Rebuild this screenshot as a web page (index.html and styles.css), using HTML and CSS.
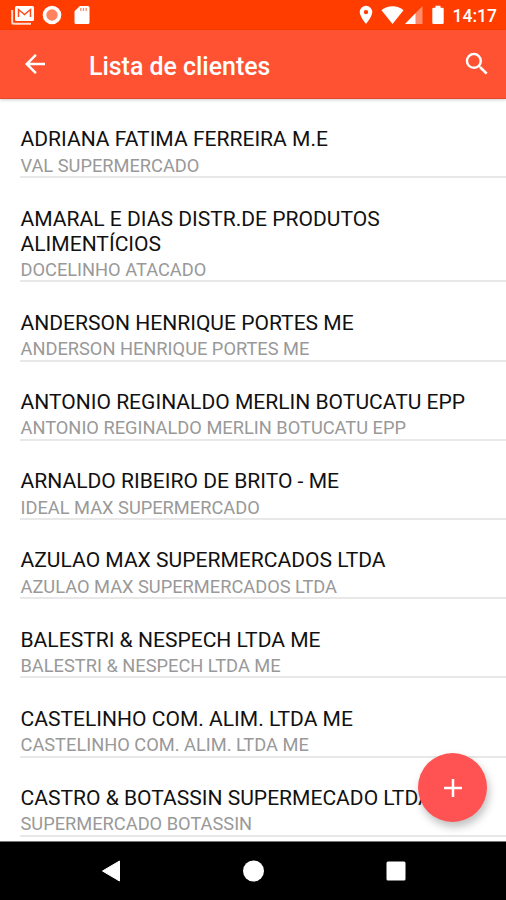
FILE: index.html
```html
<!DOCTYPE html>
<html lang="pt-BR">
<head>
    <meta charset="UTF-8">
    <meta name="viewport" content="width=device-width, initial-scale=1.0">
    <title>Lista de clientes</title>
    <link rel="stylesheet" href="styles.css">
</head>
<body>
    <div class="screen">
        <div class="status-bar">
            <div class="notifications">
                <svg width="24" height="20" viewBox="0 0 24 20">
                    <path d="M1.2 5v12.2a1.5 1.5 0 0 0 1.5 1.5H20" fill="none" stroke="#ffd9cf" stroke-width="2"/>
                    <rect x="4" y="1" width="19" height="15" rx="1.5" fill="#fff"/>
                    <path d="M7.5 12V4.5l6 5 6-5V12" fill="none" stroke="#ff4a1c" stroke-width="1.5"/>
                </svg>
                <svg width="20" height="20" viewBox="0 0 20 20">
                    <circle cx="10" cy="10" r="9.3" fill="#fff"/>
                    <circle cx="10" cy="10" r="5.7" fill="#ff825f"/>
                </svg>
                <svg class="sd-icon" width="16" height="20" viewBox="0 0 16 20">
                    <path d="M5.8 1H14a1.5 1.5 0 0 1 1.5 1.5v15A1.5 1.5 0 0 1 14 19H2a1.5 1.5 0 0 1-1.5-1.5V6.3z" fill="#fff"/>
                    <path d="M6.8 3v3M9.5 3v3M12.2 3v3" stroke="#ff8a6b" stroke-width="1.3"/>
                </svg>
            </div>
            <div class="indicators">
                <svg width="14" height="20" viewBox="0 0 14 20">
                    <path fill-rule="evenodd" d="M7 .8A6.3 6.3 0 0 0 .7 7.1C.7 11.7 7 19 7 19s6.3-7.3 6.3-11.9A6.3 6.3 0 0 0 7 .8zM7 9.3a2.2 2.2 0 1 1 0-4.4 2.2 2.2 0 0 1 0 4.4z" fill="#fff"/>
                </svg>
                <svg class="wifi-icon" width="23" height="20" viewBox="0 0 23 20">
                    <path d="M11.5 19 .5 5.2C3.5 2.6 7.3 1.2 11.5 1.2s8 1.4 11 4z" fill="#fff"/>
                </svg>
                <svg width="18" height="20" viewBox="0 0 18 20">
                    <path d="M0 19 17.5 1v18z" fill="#ff8b6b"/>
                    <path d="M0 19 10.5 8.2V19z" fill="#fff"/>
                </svg>
                <svg class="battery-icon" width="12" height="20" viewBox="0 0 12 20">
                    <path d="M3.5.8h5v2h2A1.2 1.2 0 0 1 11.7 4v13.8a1.2 1.2 0 0 1-1.2 1.2h-9a1.2 1.2 0 0 1-1.2-1.2V4a1.2 1.2 0 0 1 1.2-1.2h2z" fill="#fff"/>
                </svg>
                <span class="clock">14:17</span>
            </div>
        </div>

        <header class="toolbar">
            <svg class="back" width="30" height="30" viewBox="0 0 24 24">
                <path d="M20 11H7.83l5.59-5.59L12 4l-8 8 8 8 1.41-1.41L7.83 13H20v-2z" fill="#fff"/>
            </svg>
            <h1>Lista de clientes</h1>
            <svg class="search" width="30" height="30" viewBox="0 0 24 24">
                <path d="M15.5 14h-.79l-.28-.27A6.471 6.471 0 0 0 16 9.5 6.5 6.5 0 1 0 9.5 16c1.61 0 3.09-.59 4.23-1.57l.27.28v.79l5 4.99L20.49 19l-4.99-5zm-6 0C7.01 14 5 11.99 5 9.5S7.01 5 9.5 5 14 7.01 14 9.5 11.99 14 9.5 14z" fill="#fff"/>
            </svg>
        </header>

        <main class="content">
            <ul class="client-list">
                <li class="client">
                    <p class="name">ADRIANA FATIMA FERREIRA M.E</p>
                    <p class="alias">VAL SUPERMERCADO</p>
                </li>
                <li class="client">
                    <p class="name">AMARAL E DIAS DISTR.DE PRODUTOS<br>ALIMENTÍCIOS</p>
                    <p class="alias">DOCELINHO ATACADO</p>
                </li>
                <li class="client">
                    <p class="name">ANDERSON HENRIQUE PORTES ME</p>
                    <p class="alias">ANDERSON HENRIQUE PORTES ME</p>
                </li>
                <li class="client">
                    <p class="name">ANTONIO REGINALDO MERLIN BOTUCATU EPP</p>
                    <p class="alias">ANTONIO REGINALDO MERLIN BOTUCATU EPP</p>
                </li>
                <li class="client">
                    <p class="name">ARNALDO RIBEIRO DE BRITO - ME</p>
                    <p class="alias">IDEAL MAX SUPERMERCADO</p>
                </li>
                <li class="client">
                    <p class="name">AZULAO MAX SUPERMERCADOS LTDA</p>
                    <p class="alias">AZULAO MAX SUPERMERCADOS LTDA</p>
                </li>
                <li class="client">
                    <p class="name">BALESTRI &amp; NESPECH LTDA ME</p>
                    <p class="alias">BALESTRI &amp; NESPECH LTDA ME</p>
                </li>
                <li class="client">
                    <p class="name">CASTELINHO COM. ALIM. LTDA ME</p>
                    <p class="alias">CASTELINHO COM. ALIM. LTDA ME</p>
                </li>
                <li class="client">
                    <p class="name">CASTRO &amp; BOTASSIN SUPERMECADO LTDA</p>
                    <p class="alias">SUPERMERCADO BOTASSIN</p>
                </li>
            </ul>
            <button class="fab" aria-label="Adicionar">
                <svg width="30" height="30" viewBox="0 0 30 30">
                    <path d="M15 6v18M6 15h18" stroke="#fff" stroke-width="2.5"/>
                </svg>
            </button>
        </main>

        <nav class="nav-bar">
            <svg width="22" height="24" viewBox="0 0 22 24">
                <path d="M2.5 12 19.5 2v20z" fill="#fff" stroke="#fff" stroke-linejoin="round"/>
            </svg>
            <svg width="22" height="24" viewBox="0 0 22 24">
                <circle cx="11.5" cy="12" r="10.5" fill="#fff"/>
            </svg>
            <svg width="22" height="24" viewBox="0 0 22 24">
                <rect x="1.5" y="2.5" width="19" height="19" rx="1.5" fill="#fff"/>
            </svg>
        </nav>
    </div>
</body>
</html>
```
FILE: styles.css
```css
:root {
    --status-color: #ff3d00;
    --primary-color: #ff5233;
    --fab-color: #ff5252;
}

* {
    margin: 0;
    padding: 0;
    box-sizing: border-box;
}

body {
    background: #fff;
    font-family: Roboto, "Liberation Sans", sans-serif;
}

svg {
    display: block;
    flex-shrink: 0;
}

.screen {
    display: flex;
    flex-direction: column;
    width: 506px;
    height: 900px;
    overflow: hidden;
}

.status-bar {
    display: flex;
    justify-content: space-between;
    height: 30px;
    padding: 5px 9px 0 11px;
    background: var(--status-color);
}

.notifications,
.indicators {
    display: flex;
}

.notifications {
    gap: 7px;
}

.sd-icon {
    margin-left: 5px;
}

.wifi-icon {
    margin: 0 1px 0 8px;
}

.battery-icon {
    margin: 0 9px 0 9px;
}

.clock {
    color: #fff;
    font-size: 17.5px;
    font-weight: 500;
    line-height: 22px;
}

.toolbar {
    display: flex;
    align-items: center;
    height: 69px;
    padding: 0 14px 0 20px;
    background: var(--primary-color);
    border-bottom: 1px solid #e5482c;
    box-shadow: 0 1px 3px rgba(0, 0, 0, 0.2);
    z-index: 1;
}

.toolbar h1 {
    flex: 1;
    margin-left: 39px;
    padding-top: 4px;
    color: #fff;
    font-size: 24.9px;
    font-weight: 500;
}

.content {
    position: relative;
    flex: 1;
    min-height: 0;
    overflow: hidden;
}

.client-list {
    list-style: none;
    padding-left: 20px;
}

.client {
    padding: 27.3px 0 0;
    border-bottom: 2px solid #e8e8e8;
}

.name {
    padding-left: 0.5px;
    color: #111;
    font-size: 21.05px;
    line-height: 25px;
}

.alias {
    margin-top: 3.5px;
    padding-left: 0.5px;
    color: #999;
    font-size: 18.25px;
    line-height: 21.4px;
}

.fab {
    position: absolute;
    right: 19px;
    bottom: 19px;
    display: flex;
    align-items: center;
    justify-content: center;
    width: 69px;
    height: 69px;
    border: none;
    border-radius: 50%;
    background: var(--fab-color);
    box-shadow: 2px 5px 8px rgba(0, 0, 0, 0.25);
}

.nav-bar {
    display: flex;
    justify-content: center;
    align-items: center;
    gap: 120.5px;
    height: 59px;
    border-top: 1px solid #777;
    background: #000;
}
```
